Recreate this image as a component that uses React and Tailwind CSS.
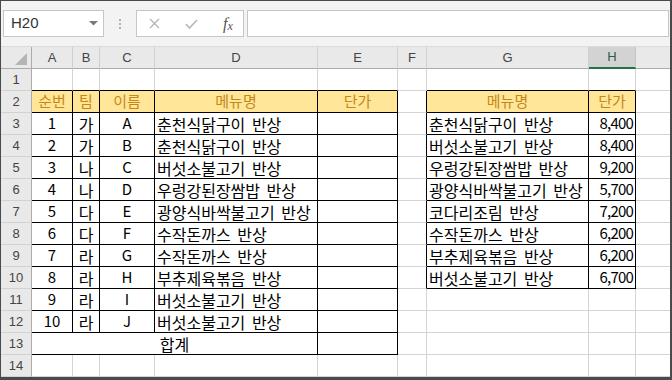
import React from 'react';

const KR = { fontFamily: '"Noto Sans CJK KR", "Noto Sans", sans-serif' };
const UI = { fontFamily: '"Liberation Sans", Arial, sans-serif' };

const COL_NAMES = ['', 'A', 'B', 'C', 'D', 'E', 'F', 'G', 'H', ''];

const leftRows = [
  ['1', '가', 'A', '춘천식닭구이 반상'],
  ['2', '가', 'B', '춘천식닭구이 반상'],
  ['3', '나', 'C', '버섯소불고기 반상'],
  ['4', '나', 'D', '우렁강된장쌈밥 반상'],
  ['5', '다', 'E', '광양식바싹불고기 반상'],
  ['6', '다', 'F', '수작돈까스 반상'],
  ['7', '라', 'G', '수작돈까스 반상'],
  ['8', '라', 'H', '부추제육볶음 반상'],
  ['9', '라', 'I', '버섯소불고기 반상'],
  ['10', '라', 'J', '버섯소불고기 반상'],
];

const priceRows = [
  ['춘천식닭구이 반상', '8,400'],
  ['버섯소불고기 반상', '8,400'],
  ['우렁강된장쌈밥 반상', '9,200'],
  ['광양식바싹불고기 반상', '5,700'],
  ['코다리조림 반상', '7,200'],
  ['수작돈까스 반상', '6,200'],
  ['부추제육볶음 반상', '6,200'],
  ['버섯소불고기 반상', '6,700'],
];

const headers = { 1: '순번', 2: '팀', 3: '이름', 4: '메뉴명', 5: '단가', 7: '메뉴명', 8: '단가' };

// inside one of the two bordered tables
const inTable = (r, c) =>
  (r >= 2 && r <= 13 && c >= 1 && c <= 5) || (r >= 2 && r <= 10 && c >= 7 && c <= 8);

function cellAt(r, c) {
  if (r === 2 && headers[c]) return { text: headers[c], head: true, align: 'center' };
  if (r >= 3 && r <= 12 && c >= 1 && c <= 4)
    return { text: leftRows[r - 3][c - 1], align: c === 4 ? 'left' : 'center' };
  if (r >= 3 && r <= 10 && (c === 7 || c === 8))
    return { text: priceRows[r - 3][c - 7], align: c === 7 ? 'left' : 'right' };
  return null;
}

const alignCls = {
  left: 'justify-start pl-[2px]',
  center: 'justify-center',
  right: 'justify-end pr-[2px]',
};

function sizeCls(cell) {
  if (!cell) return 'text-[16px]';
  if (cell.head) return 'text-[15px]';
  if (cell.text.includes(',')) return 'text-[15px] tracking-[-0.8px]';
  if (/^[0-9A-Z]+$/.test(cell.text)) return 'text-[15px]';
  return 'text-[16px] [word-spacing:3px]';
}

function Toolbar() {
  return (
    <div className="h-[46px] bg-[#f3f3f3] border-b border-b-[#dcdcdc] flex items-start pt-[9px] pl-[2px] pr-[1px]">
      <div className="w-[101px] h-[27px] bg-white border border-[#c6c6c6] flex items-center justify-between pl-[7px] pr-[5px]">
        <span className="text-[15px] text-[#333]" style={UI}>H20</span>
        <svg width="9" height="5" viewBox="0 0 9 5">
          <path d="M0 0 L9 0 L4.5 4.5 Z" fill="#7a7a7a" />
        </svg>
      </div>
      <div className="w-[32px] h-[27px] flex flex-col items-center justify-center gap-[2px]">
        <div className="w-[2px] h-[2px] bg-[#b3b3b3]" />
        <div className="w-[2px] h-[2px] bg-[#b3b3b3]" />
        <div className="w-[2px] h-[2px] bg-[#b3b3b3]" />
      </div>
      <div className="w-[108px] h-[27px] bg-white border border-[#c6c6c6] flex items-center pl-[12px]">
        <svg width="11" height="11" viewBox="0 0 11 11">
          <path d="M1 1 L10 10 M10 1 L1 10" stroke="#b4b4b4" strokeWidth="1.3" fill="none" />
        </svg>
        <svg className="ml-[25px]" width="13" height="10" viewBox="0 0 13 10">
          <path d="M1 5 L4.5 9 L12 1" stroke="#b4b4b4" strokeWidth="1.5" fill="none" />
        </svg>
        <span
          className="ml-[25px] italic text-[16px] text-[#555] leading-none"
          style={{ fontFamily: '"Liberation Serif", "Times New Roman", serif' }}
        >
          f<span className="text-[12px] relative top-[1px]">x</span>
        </span>
      </div>
      <div className="flex-1 ml-[3px] h-[27px] bg-white border border-[#c6c6c6]" />
    </div>
  );
}

function ColumnHeaderRow() {
  return COL_NAMES.map((name, c) => {
    if (c === 0) {
      return (
        <div
          key="corner"
          className="h-[22px] bg-[#e9e9e9] border-r border-b border-r-[#ababab] border-b-[#ababab] flex items-end justify-end pr-[4px] pb-[3px]"
        >
          <svg width="12" height="12" viewBox="0 0 12 12">
            <path d="M12 0 L12 12 L0 12 Z" fill="#b5b5b5" />
          </svg>
        </div>
      );
    }
    if (c === 8) {
      return (
        <div
          key={c}
          className="h-[22px] bg-[#d3d3d3] border-r border-r-[#c4c4c4] border-b-2 border-b-[#217346] flex items-center justify-center text-[13px] text-[#2d5b46]"
          style={UI}
        >
          {name}
        </div>
      );
    }
    return (
      <div
        key={c}
        className={
          'h-[22px] bg-[#e9e9e9] border-b border-b-[#ababab] flex items-center justify-center text-[13px] text-[#444] ' +
          (c === 9 ? '' : 'border-r border-r-[#d0d0d0]')
        }
        style={UI}
      >
        {name}
      </div>
    );
  });
}

function BodyRow({ r }) {
  const out = [];
  out.push(
    <div
      key="rh"
      className="h-[22px] bg-[#e9e9e9] border-r border-b border-r-[#ababab] border-b-[#d2d2d2] flex items-center justify-center text-[13px] text-[#444]"
      style={UI}
    >
      {r}
    </div>
  );

  if (r === 13) {
    // A13:D13 merged
    out.push(
      <div
        key="merge"
        className="col-span-4 h-[22px] bg-white border-r border-b border-r-black border-b-black flex items-center justify-center text-[16px] text-black"
        style={KR}
      >
        합계
      </div>
    );
  }

  for (let c = 1; c <= 9; c++) {
    if (r === 13 && c <= 4) continue;
    const cell = cellAt(r, c);
    const rightBlack = inTable(r, c) || inTable(r, c + 1);
    const bottomBlack = inTable(r, c) || inTable(r + 1, c);
    const cls = [
      'h-[22px] flex items-center whitespace-nowrap overflow-visible',
      sizeCls(cell),
      cell && cell.head ? 'bg-[#ffe699] text-[#c8861a]' : 'bg-white text-black',
      cell ? alignCls[cell.align] : '',
      c === 9 ? '' : 'border-r',
      c === 9 ? '' : rightBlack ? 'border-r-black' : 'border-r-[#d4d4d4]',
      'border-b',
      bottomBlack ? 'border-b-black' : 'border-b-[#d4d4d4]',
    ].join(' ');
    out.push(
      <div key={c} className={cls} style={KR}>
        {cell ? cell.text : null}
      </div>
    );
  }
  return out;
}

export default function App() {
  const rows = Array.from({ length: 14 }, (_, i) => i + 1);
  return (
    <div className="w-[672px] h-[380px] bg-white overflow-hidden border-t border-l border-r-2 border-b-[3px] border-[#4a4a4a] flex flex-col">
      <Toolbar />
      <div className="grid grid-cols-[31px_41px_27px_55px_163px_80px_29px_162px_47px_1fr] auto-rows-[22px]">
        <ColumnHeaderRow />
        {rows.map((r) => (
          <BodyRow key={r} r={r} />
        ))}
      </div>
    </div>
  );
}
